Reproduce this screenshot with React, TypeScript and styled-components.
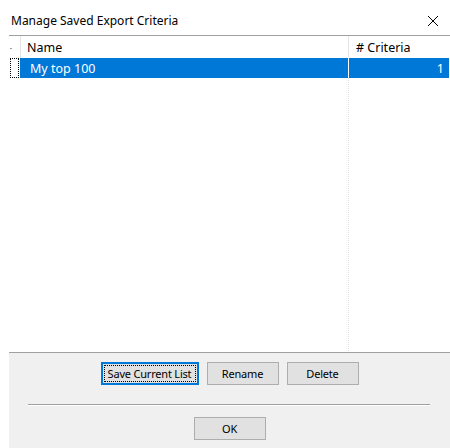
import React from 'react';
import styled, { createGlobalStyle } from 'styled-components';

const GlobalStyle = createGlobalStyle`
    html, body {
        margin: 0;
        padding: 0;
        background: #ffffff;
    }
    body {
        font-family: "Noto Sans", "DejaVu Sans", sans-serif;
    }
`;

const Dialog = styled.div`
    width: 450px;
    height: 448px;
    display: flex;
    flex-direction: column;
    background: #ffffff;
    overflow: hidden;
`;

const TitleBar = styled.div`
    height: 35px;
    display: flex;
    align-items: center;
    justify-content: space-between;
    padding: 6px 8px 0 11px;
    box-sizing: border-box;
    color: #000;
    font-size: 12px;
`;

const CloseButton = styled.div`
    width: 14px;
    height: 14px;
    display: flex;
    align-items: center;
    justify-content: center;
    margin-right: 2px;
`;

const Body = styled.div`
    flex: 1;
    margin-left: 9px;
    display: flex;
    flex-direction: column;
    border-top: 1px solid #a0a0a0;
`;

const Grid = styled.div`
    flex: 1;
    display: grid;
    grid-template-columns: 11px 328px 1px 100px;
    grid-template-rows: 22px 20px 1fr;
    font-size: 12.5px;
`;

const RowHeader = styled.div<{ $focus?: boolean }>`
    position: relative;
    box-sizing: border-box;
    ${({ $focus }) => ($focus ? 'border: 1px dotted #000; margin: 0 1px 0 1px;' : '')}
`;

const HeaderTick = styled.span`
    position: absolute;
    left: 1px;
    top: 12px;
    width: 2px;
    height: 1px;
    background: #9a9a9a;
`;

const HeaderCell = styled.div<{ $first?: boolean }>`
    display: flex;
    align-items: center;
    padding-left: ${({ $first }) => ($first ? '6px' : '7px')};
    color: #000;
    border-left: ${({ $first }) => ($first ? '1px solid #e5e5e5' : 'none')};
`;

const Divider = styled.div<{ $light?: boolean; $dotted?: boolean }>`
    background: ${({ $light }) => ($light ? '#ffffff' : '#e5e5e5')};
    ${({ $dotted }) =>
        $dotted
            ? 'background: none; border-left: 1px dotted #e2e2e2; margin-bottom: 1px;'
            : ''}
`;

const Cell = styled.div<{ $right?: boolean }>`
    display: flex;
    align-items: center;
    justify-content: ${({ $right }) => ($right ? 'flex-end' : 'flex-start')};
    padding: ${({ $right }) => ($right ? '0 5px 0 0' : '0 0 0 10px')};
    background: #0078d7;
    color: #ffffff;
`;

const Empty = styled.div``;

const Panel = styled.div`
    height: 95px;
    background: #f0f0f0;
    border-top: 1px solid #a0a0a0;
    display: flex;
    flex-direction: column;
    align-items: center;
    font-size: 11px;
    letter-spacing: -0.2px;
`;

const ButtonRow = styled.div`
    display: flex;
    gap: 8px;
    margin-top: 9px;
`;

const Button = styled.div<{ $width?: number; $focused?: boolean }>`
    width: ${({ $width }) => $width || 72}px;
    height: 23px;
    box-sizing: border-box;
    display: flex;
    align-items: center;
    justify-content: center;
    white-space: nowrap;
    background: #e1e1e1;
    border: ${({ $focused }) => ($focused ? '2px solid #0078d7' : '1px solid #adadad')};
    color: #000;
    padding: ${({ $focused }) => ($focused ? '1px' : '0')};
`;

const FocusRing = styled.div`
    flex: 1;
    align-self: stretch;
    display: flex;
    align-items: center;
    justify-content: center;
    border: 1px dotted #000;
`;

const Separator = styled.div`
    width: 402px;
    height: 1px;
    background: #a0a0a0;
    border-bottom: 1px solid #ffffff;
    margin: 19px 0 11px -2px;
`;

const App: React.FC = () => {
    return (
        <>
            <GlobalStyle />
            <Dialog>
                <TitleBar>
                    <span>Manage Saved Export Criteria</span>
                    <CloseButton>
                        <svg width="12" height="12" viewBox="0 0 12 12">
                            <path d="M1 1 L11 11 M11 1 L1 11" stroke="#000" strokeWidth="1" />
                        </svg>
                    </CloseButton>
                </TitleBar>
                <Body>
                    <Grid>
                        <RowHeader>
                            <HeaderTick />
                        </RowHeader>
                        <HeaderCell $first>Name</HeaderCell>
                        <Divider />
                        <HeaderCell># Criteria</HeaderCell>

                        <RowHeader $focus />
                        <Cell>My top 100</Cell>
                        <Divider $light />
                        <Cell $right>1</Cell>

                        <Empty />
                        <Empty />
                        <Divider $dotted />
                        <Empty />
                    </Grid>
                    <Panel>
                        <ButtonRow>
                            <Button $width={98} $focused>
                                <FocusRing>Save Current List</FocusRing>
                            </Button>
                            <Button>Rename</Button>
                            <Button>Delete</Button>
                        </ButtonRow>
                        <Separator />
                        <Button>OK</Button>
                    </Panel>
                </Body>
            </Dialog>
        </>
    );
};

export default App;
